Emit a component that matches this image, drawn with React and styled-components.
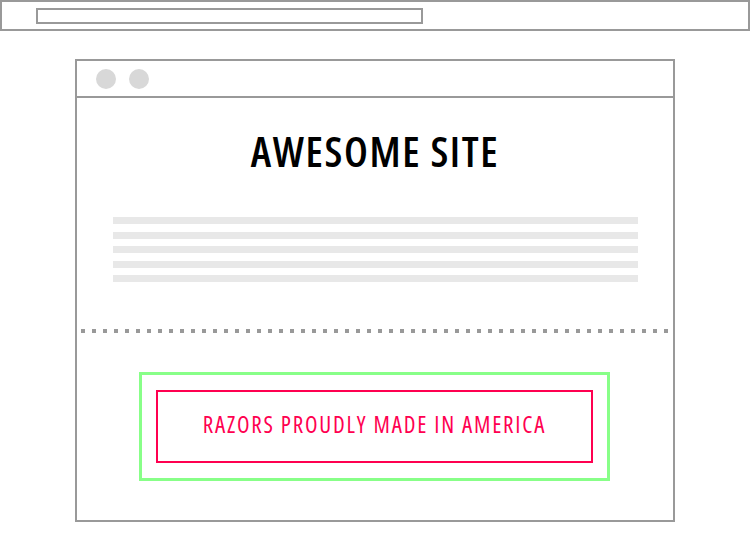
import styled, { createGlobalStyle } from 'styled-components';

const GlobalStyle = createGlobalStyle`
    html, body {
        margin: 0;
        padding: 0;
        background: #fff;
        font-family: "Open Sans", "Liberation Sans", sans-serif;
    }
    * { box-sizing: border-box; }
`;

const TopBar = styled.div`
    height: 31px;
    width: 750px;
    border: 2px solid #999;
    padding: 6px 0 0 34px;
`;

const AddressBar = styled.div`
    width: 387px;
    height: 16px;
    border: 2px solid #999;
`;

const Frame = styled.div`
    margin: 28px 0 0 75px;
    width: 600px;
    height: 463px;
    border: 2px solid #999;
    display: flex;
    flex-direction: column;
`;

const FrameHeader = styled.div`
    height: 37px;
    border-bottom: 2px solid #999;
    display: flex;
    align-items: center;
    gap: 13px;
    padding-left: 19px;
`;

const Dot = styled.span`
    width: 20px;
    height: 20px;
    border-radius: 50%;
    background: #d8d8d8;
`;

const Hero = styled.div`
    display: flex;
    flex-direction: column;
    align-items: center;
    padding-top: 32px;
`;

const Title = styled.h1`
    margin: 0;
    font-size: 42px;
    line-height: 42px;
    font-weight: 600;
    font-stretch: 75%;
    letter-spacing: 1.6px;
    color: #000;
`;

const Lines = styled.div`
    margin-top: 45px;
    width: 525px;
    display: flex;
    flex-direction: column;
    gap: 7.5px;
`;

const Line = styled.div`
    height: 7px;
    background: #e8e8e8;
`;

const Divider = styled.div`
    margin: 47px 0 0 4px;
    width: 587px;
    height: 4px;
    background: repeating-linear-gradient(to right, #999 0 4px, transparent 4px 11px);
`;

const Cta = styled.div`
    margin: 39px 0 0 62px;
    width: 471px;
    border: 3px solid #88ff88;
    padding: 15px 14px;
`;

const CtaButton = styled.div`
    height: 73px;
    border: 2px solid #ff0050;
    display: flex;
    align-items: center;
    justify-content: center;
    color: #ff0050;
    font-size: 23px;
    line-height: 23px;
    padding-bottom: 4px;
    font-stretch: 75%;
    letter-spacing: 1.8px;
`;

export default function App() {
    return (
        <>
            <GlobalStyle />
            <TopBar>
                <AddressBar />
            </TopBar>
            <Frame>
                <FrameHeader>
                    <Dot />
                    <Dot />
                </FrameHeader>
                <Hero>
                    <Title>AWESOME SITE</Title>
                    <Lines>
                        {[0, 1, 2, 3, 4].map((i) => <Line key={i} />)}
                    </Lines>
                </Hero>
                <Divider />
                <Cta>
                    <CtaButton>RAZORS PROUDLY MADE IN AMERICA</CtaButton>
                </Cta>
            </Frame>
        </>
    );
}
